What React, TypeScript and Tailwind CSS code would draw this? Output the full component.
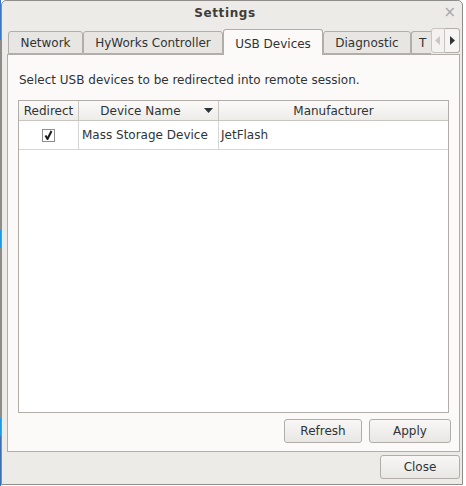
import { useState } from 'react';

const font = { fontFamily: '"DejaVu Sans", "Liberation Sans", sans-serif' };

function Tab({ label, active, width }: { label: string; active?: boolean; width: string }) {
  if (active) {
    return (
      <div
        className={`relative z-10 -mb-px flex h-[26px] ${width} items-start justify-center rounded-t-[3px] border border-b-0 border-[#b1aea9] bg-[#fcfaf8] pt-[5px] text-[12px] text-[#2e3436]`}
      >
        {label}
      </div>
    );
  }
  return (
    <div
      className={`flex h-[23px] ${width} items-center justify-center rounded-t-[3px] border border-[#b1aea9] bg-[#e8e6e3] pt-[1px] text-[12px] text-[#2e3436]`}
    >
      {label}
    </div>
  );
}

function Button({ label, width }: { label: string; width: string }) {
  return (
    <button
      className={`flex h-[24px] ${width} items-center justify-center rounded-[3px] border border-[#b1aea9] bg-gradient-to-b from-[#f8f7f6] to-[#e9e7e4] text-[12px] text-[#2e3436]`}
    >
      {label}
    </button>
  );
}

export default function App() {
  const [checked, setChecked] = useState(true);

  return (
    <div className="flex h-[486px] w-[466px] bg-white" style={font}>
      {/* sliver of desktop behind the window */}
      <div className="flex w-[1px] flex-col">
        <div className="h-[40px] bg-[#3a78c0]" />
        <div className="h-[190px] bg-[#8e8c89]" />
        <div className="h-[18px] bg-[#1e9be0]" />
        <div className="h-[170px] bg-[#8e8c89]" />
        <div className="h-[18px] bg-[#1e9be0]" />
        <div className="flex-1 bg-[#3a6fb0]" />
      </div>
      <div className="flex h-[485px] w-[462px] flex-col rounded-t-[5px] border border-[#8f8d8a] bg-[#edebe8]">
        {/* title bar */}
        <div className="relative flex h-[24px] items-center justify-center pr-[14px]">
          <span className="text-[12px] font-bold tracking-[0.6px] text-[#3d3d3d]">Settings</span>
          <span className="absolute right-[6px] top-[4px] text-[15px] leading-none text-[#a8a8a8]">×</span>
        </div>

        {/* notebook */}
        <div className="ml-[5px] mt-[3px] flex flex-col">
          <div className="flex items-end pl-[1px]">
            <Tab label="Network" width="w-[75px]" />
            <Tab label="HyWorks Controller" width="w-[140px]" />
            <Tab label="USB Devices" width="w-[100px]" active />
            <Tab label="Diagnostic" width="w-[88px]" />
            <div className="flex h-[23px] w-[20px] items-center overflow-hidden rounded-tl-[3px] border border-r-0 border-[#b1aea9] bg-[#e8e6e3] pl-[7px] pt-[1px] text-[12px] text-[#2e3436]">
              T
            </div>
            <div className="mb-[1px] flex h-[25px] w-[14px] items-center justify-center rounded-l-[3px] border border-[#c8c5c1] bg-[#f3f2f0]">
              <svg width="6" height="9" viewBox="0 0 6 9">
                <path d="M5 0 L0 4.5 L5 9 Z" fill="#c9c7c4" />
              </svg>
            </div>
            <div className="mb-[1px] flex h-[25px] w-[15px] items-center justify-center rounded-r-[3px] border border-l-0 border-[#b1aea9] bg-[#f6f5f4]">
              <svg width="6" height="9" viewBox="0 0 6 9">
                <path d="M1 0 L6 4.5 L1 9 Z" fill="#2e3436" />
              </svg>
            </div>
          </div>

          <div className="flex h-[398px] w-[453px] flex-col border border-[#b1aea9] bg-[#fcfaf8] pl-[10px] pr-[8px]">
            <p className="mt-[16px] pl-[1px] text-[12px] text-[#2e3436]">
              Select USB devices to be redirected into remote session.
            </p>

            <div className="mt-[11px] flex h-[313px] w-[431px] flex-col border border-[#b1aea9] bg-white">
              <div className="flex h-[20px] border-b border-[#c8c5c1] bg-gradient-to-b from-[#fbfaf9] to-[#eeece9] text-[12px] text-[#2e3436]">
                <div className="flex w-[60px] items-center justify-center border-r border-[#c8c5c1]">Redirect</div>
                <div className="relative flex w-[140px] items-center justify-center border-r border-[#c8c5c1] pr-[16px]">
                  Device Name
                  <svg className="absolute right-[5px] top-[7px]" width="9" height="5" viewBox="0 0 9 5">
                    <path d="M0 0 H9 L4.5 5 Z" fill="#2e3436" />
                  </svg>
                </div>
                <div className="flex flex-1 items-center justify-center">Manufacturer</div>
              </div>
              <div className="flex h-[29px] border-b border-[#d8d6d2] text-[12px] text-[#2e3436]">
                <div className="flex w-[60px] items-center justify-center border-r border-[#d8d6d2]">
                  <button
                    onClick={() => setChecked(!checked)}
                    className="flex h-[13px] w-[13px] items-center justify-center border border-[#8f8d8a] bg-white"
                  >
                    {checked && (
                      <svg width="9" height="10" viewBox="0 0 9 10">
                        <path d="M1.5 5.5 L3.5 9 L7.5 1" stroke="#1a1a1a" strokeWidth="2" fill="none" />
                      </svg>
                    )}
                  </button>
                </div>
                <div className="flex w-[140px] items-center border-r border-[#d8d6d2] pl-[3px]">Mass Storage Device</div>
                <div className="flex flex-1 items-center pl-[2px]">JetFlash</div>
              </div>
            </div>

            <div className="mt-[6px] flex justify-end gap-[7px]">
              <Button label="Refresh" width="w-[78px]" />
              <Button label="Apply" width="w-[82px]" />
            </div>
          </div>
        </div>

        <div className="mt-[3px] flex justify-end pr-[2px]">
          <Button label="Close" width="w-[80px]" />
        </div>
      </div>
    </div>
  );
}
